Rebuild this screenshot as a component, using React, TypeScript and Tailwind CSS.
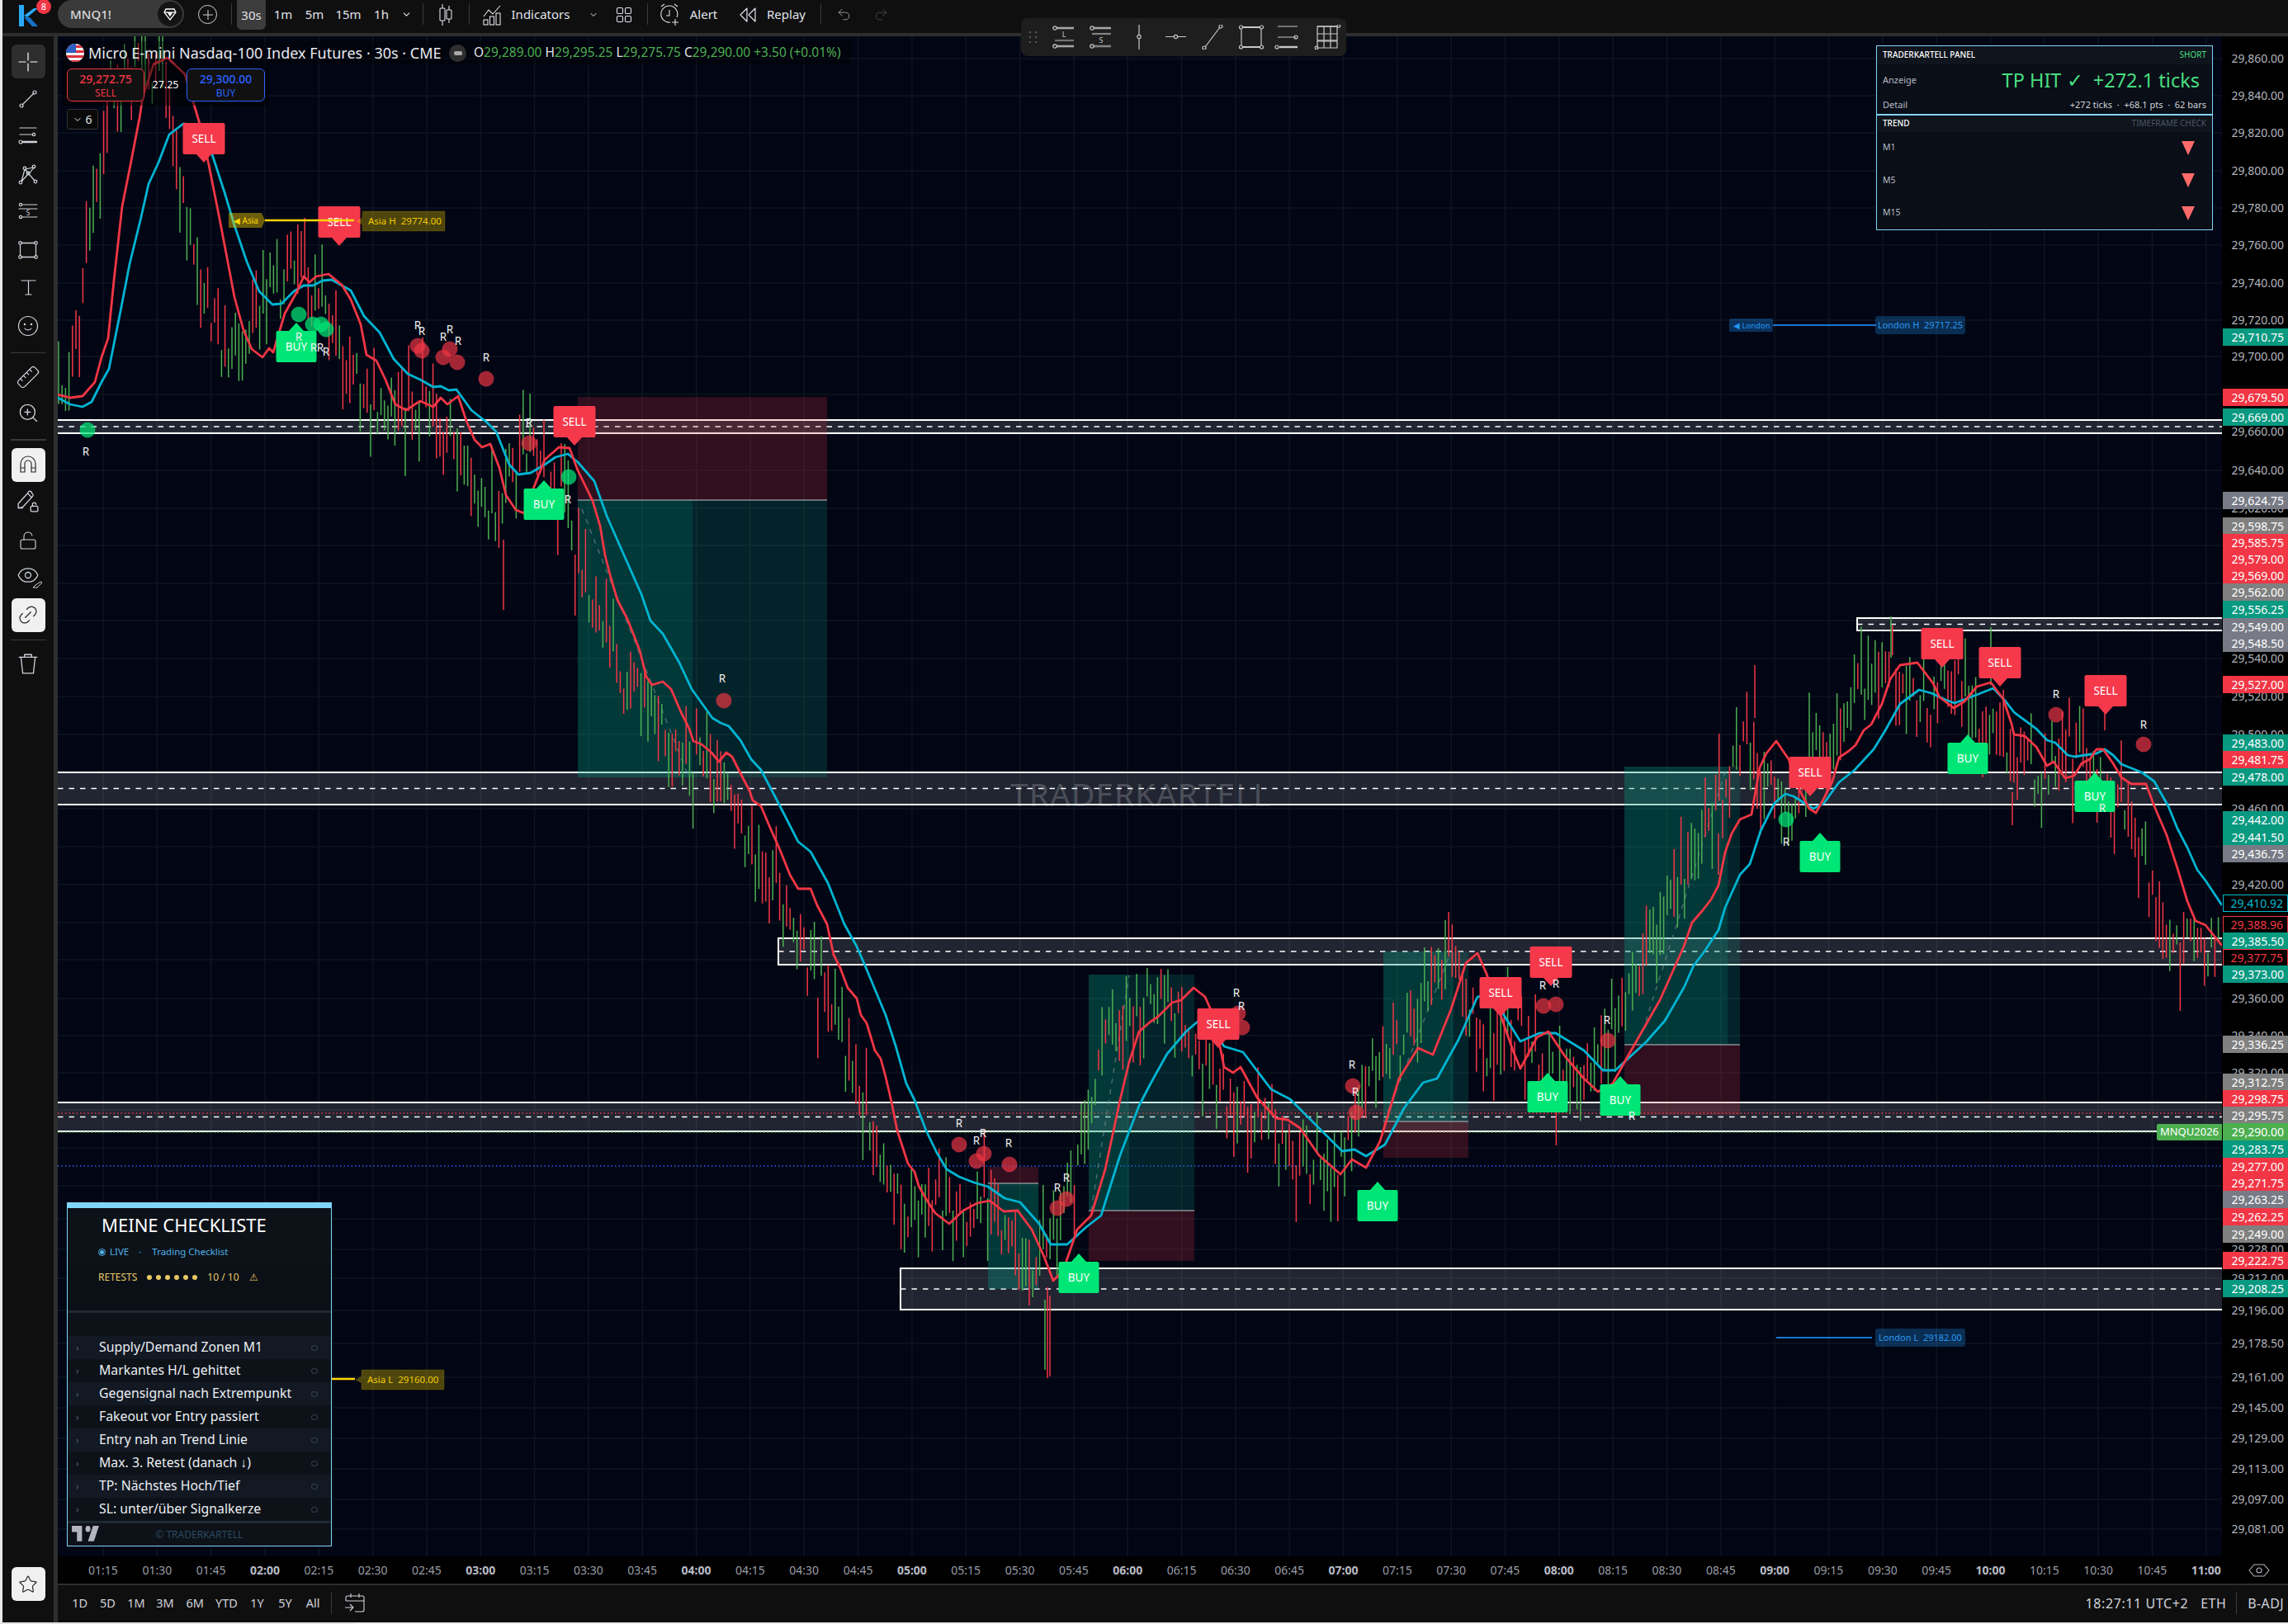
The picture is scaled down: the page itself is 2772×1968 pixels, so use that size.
import React from "react";
import { ChevronDown, LockOpen, Redo2, Star, Undo2, ZoomIn, Ruler, Eye, Link2 } from "lucide-react";

// chart data, page pixel coordinates
const RED = [70,478,85,482,100,480,115,463,123,433,131,410,138,340,148,250,158,200,169,143,173,117,186,78,203,70,224,90,242,150,253,200,265,260,274,307,284,360,295,400,305,423,318,433,326,422,331,427,345,380,360,353,368,335,375,342,383,335,398,332,414,345,425,363,437,393,444,430,456,437,467,460,479,490,492,497,509,486,525,493,534,482,542,490,555,480,565,510,575,533,584,542,594,538,605,567,613,600,625,618,635,622,647,590,660,557,677,542,690,543,700,570,718,607,727,637,733,673,740,700,748,727,760,750,768,770,775,788,783,820,790,830,803,826,813,835,825,863,835,883,840,898,850,902,862,912,871,923,880,912,887,917,897,937,908,958,912,970,922,977,933,1003,945,1030,957,1060,967,1077,982,1077,990,1097,1002,1120,1010,1157,1018,1173,1027,1197,1038,1210,1043,1230,1050,1240,1060,1273,1067,1283,1073,1305,1080,1335,1087,1370,1100,1410,1108,1420,1113,1437,1122,1453,1133,1470,1150,1483,1167,1467,1184,1458,1199,1455,1216,1468,1233,1467,1250,1490,1265,1523,1276,1552,1288,1540,1305,1490,1322,1473,1339,1417,1357,1333,1368,1287,1380,1250,1394,1238,1403,1232,1420,1215,1431,1212,1446,1197,1460,1208,1471,1233,1483,1293,1494,1300,1503,1293,1523,1330,1546,1355,1560,1357,1575,1367,1598,1400,1624,1423,1638,1405,1655,1415,1672,1383,1695,1307,1718,1270,1736,1278,1758,1223,1776,1167,1790,1155,1801,1180,1819,1233,1833,1273,1842,1295,1862,1257,1876,1250,1896,1280,1919,1307,1936,1323,1954,1313,1971,1282,2011,1212,2040,1147,2050,1118,2063,1103,2073,1090,2082,1073,2090,1033,2098,1010,2108,993,2122,987,2132,930,2140,913,2152,898,2167,920,2180,957,2192,980,2200,985,2210,967,2220,947,2228,918,2240,910,2248,903,2258,885,2267,878,2280,853,2290,823,2302,806,2323,803,2342,828,2350,845,2367,858,2380,850,2395,832,2412,827,2427,847,2437,877,2440,890,2453,892,2467,905,2480,928,2488,923,2502,943,2513,940,2522,925,2532,920,2540,908,2548,908,2560,925,2570,942,2582,950,2600,950,2610,977,2625,1012,2638,1052,2650,1092,2660,1116,2672,1121,2692,1146];
const CYAN = [70,482,85,490,100,493,111,487,123,463,132,447,146,377,157,320,171,263,180,223,192,197,205,163,222,150,240,152,257,187,272,233,284,273,299,317,314,353,330,369,341,368,356,353,368,346,379,346,391,340,402,339,425,352,441,383,460,403,477,435,494,453,509,460,525,469,534,468,544,473,553,472,571,497,590,512,601,523,617,563,628,575,643,573,660,563,673,554,688,550,700,560,720,583,735,625,757,675,777,720,788,752,803,768,823,803,838,835,863,870,873,876,883,880,897,897,910,920,922,933,943,973,967,1020,982,1032,1003,1070,1023,1120,1038,1147,1048,1170,1073,1230,1085,1267,1098,1313,1108,1333,1122,1370,1135,1397,1147,1417,1162,1426,1180,1433,1197,1438,1217,1452,1236,1457,1259,1483,1273,1508,1293,1508,1316,1487,1334,1473,1357,1400,1380,1340,1394,1313,1414,1277,1437,1250,1451,1238,1465,1240,1483,1268,1506,1275,1540,1320,1563,1332,1598,1367,1626,1395,1641,1393,1655,1401,1678,1387,1701,1343,1724,1312,1741,1307,1767,1260,1790,1208,1805,1205,1822,1230,1842,1262,1865,1252,1885,1252,1919,1273,1942,1297,1957,1297,1994,1263,2017,1237,2040,1197,2052,1170,2065,1153,2082,1127,2090,1100,2108,1060,2120,1047,2133,1007,2150,973,2163,962,2173,965,2197,980,2210,973,2228,948,2247,933,2270,908,2283,887,2302,853,2325,836,2340,840,2357,848,2368,852,2387,845,2415,834,2430,850,2440,863,2467,883,2480,897,2490,900,2505,915,2513,917,2540,913,2550,908,2560,915,2570,926,2595,936,2610,947,2627,977,2638,1004,2650,1027,2662,1054,2672,1067,2692,1097];

function toPoints(a: number[]) {
  let s = "";
  for (let i = 0; i < a.length; i += 2) s += `${a[i]},${a[i + 1]} `;
  return s;
}

function lerp(a: number[], x: number) {
  if (x <= a[0]) return a[1];
  for (let i = 2; i < a.length; i += 2) {
    if (x <= a[i]) {
      const t = (x - a[i - 2]) / (a[i] - a[i - 2]);
      return a[i - 1] + t * (a[i + 1] - a[i - 1]);
    }
  }
  return a[a.length - 1];
}

function buildCandles() {
  let seed = 73129;
  const rnd = () => {
    seed = (seed + 0x6d2b79f5) | 0;
    let t = Math.imul(seed ^ (seed >>> 15), 1 | seed);
    t = (t + Math.imul(t ^ (t >>> 7), 61 | t)) ^ t;
    return ((t ^ (t >>> 14)) >>> 0) / 4294967296;
  };
  let green = "";
  let red = "";
  for (let x = 71; x < 2690; x += 4.2) {
    const c = lerp(RED, x + 36) + (rnd() - 0.5) * 50;
    const len = 22 + rnd() * 62;
    const k = rnd();
    const rising = lerp(RED, x + 30) > lerp(RED, x + 60);
    const isGreen = rnd() < (rising ? 0.66 : 0.34);
    const seg = `M${x.toFixed(1)} ${(c - len * k).toFixed(1)}V${(c + len * (1 - k)).toFixed(1)}`;
    if (isGreen) green += seg;
    else red += seg;
  }
  // the long wicks
  red += "M610 654V739M1269 1560V1670M2126 806V870M1272 1570V1668M2082 1010V1060M2438 960V1000M2550 860V885";
  green += "M2291 747V797M2412 760V830M1266 1575V1660";
  return { green, red };
}
const candles = buildCandles();

const ZONES = [
  { x: 70, y1: 509, y2: 525, left: false },
  { x: 2250, y1: 749, y2: 764, left: true },
  { x: 70, y1: 936, y2: 975, left: false },
  { x: 943, y1: 1137, y2: 1169, left: true },
  { x: 70, y1: 1336, y2: 1371, left: false },
  { x: 1091, y1: 1537, y2: 1587, left: true },
];

const BOXES = [
  { x1: 700, x2: 1002, inner: 839, teal: [606, 942], rose: [481, 606] },
  { x1: 1197, x2: 1258, inner: 1258, teal: [1434, 1562], rose: [1414, 1434] },
  { x1: 1319, x2: 1447, inner: 1368, teal: [1181, 1467], rose: [1467, 1528] },
  { x1: 1676, x2: 1779, inner: 1761, teal: [1153, 1359], rose: [1359, 1403] },
  { x1: 1968, x2: 2108, inner: 2093, teal: [929, 1266], rose: [1266, 1351] },
];

const SELLS = [[247, 149], [411, 250], [696, 492], [1476, 1222], [1818, 1184], [1879, 1147], [2193, 917], [2353, 761], [2423, 784], [2551, 818]];
const BUYS = [[359, 401], [659, 592], [1307, 1529], [1669, 1442], [1875, 1310], [1963, 1314], [2205, 1019], [2384, 900], [2538, 946]];

const RED_DOTS = [[506, 419], [511, 425], [545, 423], [537, 433], [554, 439], [589, 459], [641, 537], [877, 849], [1162, 1387], [1183, 1407], [1192, 1398], [1223, 1411], [1281, 1464], [1292, 1453], [1500, 1228], [1505, 1245], [1639, 1316], [1643, 1348], [1870, 1219], [1885, 1217], [1948, 1261], [2491, 866], [2597, 902]];
const GREEN_DOTS = [[362, 381], [379, 393], [389, 393], [395, 399], [106, 521], [689, 578], [2164, 993]];
const R_LABELS = [[506, 394], [511, 401], [537, 408], [545, 399], [555, 413], [589, 433], [641, 512], [875, 822], [1162, 1361], [1183, 1382], [1191, 1373], [1222, 1385], [1281, 1439], [1292, 1427], [1498, 1203], [1504, 1219], [1638, 1290], [1642, 1323], [1869, 1194], [1885, 1192], [1947, 1236], [1977, 1352], [2491, 841], [2597, 878], [104, 547], [362, 408], [380, 421], [388, 421], [395, 426], [688, 605], [2164, 1020], [2547, 979]];

const PRICE_LABELS = [["29,860.00", 71], ["29,840.00", 116], ["29,820.00", 161], ["29,800.00", 207], ["29,780.00", 252], ["29,760.00", 297], ["29,740.00", 343], ["29,720.00", 388], ["29,700.00", 432], ["29,660.00", 523], ["29,640.00", 570], ["29,620.00", 616], ["29,540.00", 798], ["29,520.00", 844], ["29,500.00", 890], ["29,460.00", 980], ["29,420.00", 1072], ["29,360.00", 1210], ["29,340.00", 1255], ["29,320.00", 1300], ["29,228.00", 1514], ["29,212.00", 1549], ["29,196.00", 1588], ["29,178.50", 1628], ["29,161.00", 1669], ["29,145.00", 1706], ["29,129.00", 1743], ["29,113.00", 1780], ["29,097.00", 1817], ["29,081.00", 1853]] as [string, number][];

const TEAL = "bg-[#089981] text-white";
const ROSE = "bg-[#f23645] text-white";
const SLATE = "bg-[#787b86] text-white";
const GREY = "bg-[#808080] text-white";
const PRICE_TAGS = [
  ["29,710.75", 408, TEAL], ["29,679.50", 481, ROSE], ["29,669.00", 505, TEAL], ["29,624.75", 606, SLATE], ["29,598.75", 637, GREY], ["29,585.75", 657, ROSE], ["29,579.00", 677, ROSE], ["29,569.00", 697, ROSE], ["29,562.00", 717, GREY], ["29,556.25", 738, TEAL], ["29,549.00", 759, SLATE], ["29,548.50", 779, SLATE], ["29,527.00", 829, ROSE], ["29,483.00", 900, TEAL], ["29,481.75", 920, ROSE], ["29,478.00", 941, TEAL], ["29,442.00", 993, TEAL], ["29,441.50", 1014, TEAL], ["29,436.75", 1034, SLATE],
  ["29,410.92", 1094, "bg-black text-[#00bcd4] border border-[#00bcd4]"], ["29,388.96", 1120, "bg-black text-[#f23645] border border-[#f23645]"], ["29,385.50", 1140, TEAL], ["29,377.75", 1160, "bg-black text-[#f23645] border border-[#f23645]"], ["29,373.00", 1180, TEAL],
  ["29,336.25", 1265, GREY], ["29,312.75", 1311, GREY], ["29,298.75", 1331, ROSE], ["29,295.75", 1351, GREY], ["29,290.00", 1371, "bg-[#4caf50] text-white"], ["29,283.75", 1392, TEAL], ["29,277.00", 1413, ROSE], ["29,271.75", 1433, ROSE], ["29,263.25", 1453, SLATE], ["29,262.25", 1474, ROSE], ["29,249.00", 1495, GREY], ["29,222.75", 1527, ROSE], ["29,208.25", 1561, TEAL],
] as [string, number, string][];

const TIME_LABELS: string[] = [];
for (let i = 0; i < 40; i++) {
  const m = 75 + i * 15;
  TIME_LABELS.push(`${String(Math.floor(m / 60)).padStart(2, "0")}:${String(m % 60).padStart(2, "0")}`);
}

const CHECKS = ["Supply/Demand Zonen M1", "Markantes H/L gehittet", "Gegensignal nach Extrempunkt", "Fakeout vor Entry passiert", "Entry nah an Trend Linie", "Max. 3. Retest (danach ↓)", "TP: Nächstes Hoch/Tief", "SL: unter/über Signalkerze"];

function ToolSvg({ children, size = 26 }: { children: React.ReactNode; size?: number }) {
  return (
    <svg width={size} height={size} viewBox="0 0 26 26" fill="none" stroke="currentColor" strokeWidth="1.2" strokeLinecap="round" strokeLinejoin="round">
      {children}
    </svg>
  );
}

function ToolSlot({ className, children }: { className: string; children: React.ReactNode }) {
  return <div className={`relative flex w-[41px] items-center justify-center ${className}`}>{children}</div>;
}

function LeftToolbar() {
  const plain = "text-[#d1d4dc]";
  const active = "rounded-md bg-[#f0f0f0] text-[#2a2a2a]";
  return (
    <div className="flex w-[62px] flex-col items-center bg-[#0f0f0f]">
      <ToolSlot className="mt-[10px] h-[41px] rounded-md bg-[#2e2e2e] text-white">
        <ToolSvg><path d="M13 2v9M13 15v9M2 13h8M16 13h8" /></ToolSvg>
      </ToolSlot>
      <ToolSlot className={`mt-[2px] h-[45.5px] ${plain}`}>
        <ToolSvg><path d="M6 20 20 6" /><circle cx="5" cy="21" r="2" /><circle cx="21" cy="5" r="2" /></ToolSvg>
      </ToolSlot>
      <ToolSlot className={`h-[45.5px] ${plain}`}>
        <ToolSvg><path d="M3 3h20M3 11h15" /><circle cx="20" cy="11" r="1.7" /><path d="M7 20h16" strokeWidth="2.4" /><circle cx="4" cy="20" r="2" /></ToolSvg>
      </ToolSlot>
      <ToolSlot className={`h-[45.5px] ${plain}`}>
        <ToolSvg><path d="M5 22 9 7M10 7l9-2M10 8l11 13M14 13l6-8M5 22l8-9" /><circle cx="4" cy="23" r="1.8" /><circle cx="9" cy="6" r="1.8" /><circle cx="20" cy="4" r="1.8" /><circle cx="13" cy="12" r="1.8" /><circle cx="22" cy="22" r="1.8" /></ToolSvg>
      </ToolSlot>
      <ToolSlot className={`h-[47px] ${plain}`}>
        <ToolSvg><path d="M6 4h18M2 9h22M6 19h18" /><circle cx="4" cy="4" r="1.7" /><circle cx="4" cy="19" r="1.7" /><text x="13" y="17" fontSize="8" fill="currentColor" stroke="none" textAnchor="middle">S</text></ToolSvg>
      </ToolSlot>
      <ToolSlot className={`h-[45px] ${plain}`}>
        <ToolSvg><path d="M5 4.500h16M5 21.500h16" strokeWidth="1.600" /><path d="M3.500 7v12M22.500 7v12" /><circle cx="3.500" cy="4.500" r="1.800" /><circle cx="22.500" cy="4.500" r="1.800" /><circle cx="3.500" cy="21.500" r="1.800" /><circle cx="22.500" cy="21.500" r="1.800" /></ToolSvg>
      </ToolSlot>
      <ToolSlot className={`h-[46px] ${plain}`}>
        <ToolSvg><path d="M5 4h17M13.500 4v17M10 21h7" /></ToolSvg>
      </ToolSlot>
      <ToolSlot className={`h-[46px] ${plain}`}>
        <ToolSvg><circle cx="13" cy="13" r="11.500" /><circle cx="9" cy="11" r=".7" fill="currentColor" /><circle cx="17" cy="11" r=".7" fill="currentColor" /><path d="M9 16c2 2.500 6 2.500 8 0" /></ToolSvg>
      </ToolSlot>
      <div className="mt-[9px] h-px w-[43px] bg-[#3a3a3a]" />
      <ToolSlot className={`mt-[7px] h-[44px] ${plain}`}><Ruler size={30} strokeWidth={1} className="-scale-x-100" /></ToolSlot>
      <ToolSlot className={`h-[44px] ${plain}`}><ZoomIn size={27} strokeWidth={1.2} /></ToolSlot>
      <div className="mt-[9px] h-[2px] w-[43px] bg-[#3a3a3a]" />
      <ToolSlot className={`mt-[9px] h-[41px] ${active}`}>
        <ToolSvg><path d="M4 22V12a9 9 0 0 1 18 0v10h-5V12a4 4 0 0 0-8 0v10ZM4 17h5M17 17h5" /></ToolSvg>
      </ToolSlot>
      <ToolSlot className={`h-[47px] ${plain}`}>
        <ToolSvg size={28}><path d="M2 21V16L13 4a2 2 0 0 1 4 0l1 1a2 2 0 0 1 0 3L7 20Z" /><path d="M2 21h5M13 5l4 4" /><rect x="16" y="19" width="8" height="6" rx="1" /><path d="M18 19v-2a2 2 0 0 1 4 0" /></ToolSvg>
      </ToolSlot>
      <ToolSlot className={`h-[48px] ${plain}`}><LockOpen size={24} strokeWidth={1.1} /></ToolSlot>
      <ToolSlot className={`h-[36px] ${plain}`}>
        <Eye size={28} strokeWidth={1.1} />
        <svg className="absolute bottom-[2px] right-[3px]" width="13" height="9" viewBox="0 0 13 9" fill="none" stroke="currentColor" strokeWidth="1"><path d="M1 8h5l6-6-2-1-6 4Z" /></svg>
      </ToolSlot>
      <ToolSlot className={`mt-[10px] h-[41px] ${active}`}><Link2 size={28} strokeWidth={1.1} className="-rotate-45" /></ToolSlot>
      <div className="mt-[9px] h-px w-[43px] bg-[#3a3a3a]" />
      <ToolSlot className={`mt-[4px] h-[48px] ${plain}`}>
        <ToolSvg size={28}><path d="M3 6h20M9 6V3h8v3M5 6l2 18h12l2-18" /></ToolSvg>
      </ToolSlot>
      <ToolSlot className={`mb-[26px] mt-auto h-[41px] ${active}`}><Star size={24} strokeWidth={1.2} /></ToolSlot>
    </div>
  );
}

function TopBar() {
  const divider = "h-[26px] w-px bg-[#3a3a3a]";
  const tf = "flex items-center justify-center text-[15px]";
  const bright = "text-[#e0e3eb]";
  return (
    <div className="relative flex h-[40px] items-start bg-[#0f0f0f]">
      <div className="relative h-[36px] w-[67px]">
        <svg className="absolute left-[19px] top-[6px]" width="26" height="26" viewBox="0 0 26 26">
          <path d="M1 0h6v26H1z" fill="#29aaf5" />
          <path d="M7 13 19 4h5L11 15Z" fill="#29aaf5" />
          <path d="M7 15h7l10 11h-7Z" fill="#1572c8" />
        </svg>
        <div className="absolute left-[41px] top-[-1px] flex h-[18px] w-[18px] items-center justify-center rounded-full bg-[#f23645] text-[11px] text-white">8</div>
      </div>
      <div className="flex h-[34px] w-[153px] items-center rounded-r-full rounded-l-full bg-[#3a3a3a] pl-[15px] text-[15px] font-medium text-[#d8d8d8]">
        MNQ1!
        <div className="ml-auto mr-[2px] flex h-[30px] w-[30px] items-center justify-center rounded-full bg-[#141414] text-white">
          <svg width="18" height="18" viewBox="0 0 18 18" fill="none" stroke="currentColor" strokeWidth="1.300">
            <path d="M4 3h10l2 4-7 9-7-9Z" /><path d="M2 7h14" /><path d="M7 8h4l-2 3Z" fill="currentColor" />
          </svg>
        </div>
      </div>
      <div className="ml-[17px] mt-[6px] flex h-[23px] w-[23px] items-center justify-center rounded-full border border-[#d1d4dc] text-[#d1d4dc]">
        <svg width="12" height="12" viewBox="0 0 12 12" stroke="currentColor"><path d="M6 0v12M0 6h12" /></svg>
      </div>
      <div className={`ml-[17px] mt-[4px] ${divider}`} />
      <div className={`ml-[6px] h-[36px] w-[35px] rounded-b-md bg-[#3c3c3c] ${tf} ${bright}`}>30s</div>
      <div className={`ml-[6px] h-[35px] w-[30px] ${tf} ${bright}`}>1m</div>
      <div className={`ml-[8px] h-[35px] w-[30px] ${tf} ${bright}`}>5m</div>
      <div className={`ml-[9px] h-[35px] w-[34px] ${tf} ${bright}`}>15m</div>
      <div className={`ml-[11px] h-[35px] w-[24px] ${tf} ${bright}`}>1h</div>
      <div className={`ml-[11px] h-[35px] w-[14px] ${tf} ${bright}`}><ChevronDown size={13} /></div>
      <div className={`ml-[13px] mt-[4px] ${divider}`} />
      <div className={`ml-[17px] h-[35px] w-[20px] ${tf} ${bright}`}>
        <svg width="20" height="28" viewBox="0 0 20 28" fill="none" stroke="currentColor" strokeWidth="1.100"><path d="M6 1v5M6 21v6M14 3v5M14 19v5" /><rect x="3" y="6" width="6" height="15" rx="1" /><rect x="11" y="8" width="6" height="11" rx="1" /></svg>
      </div>
      <div className={`ml-[18px] mt-[4px] ${divider}`} />
      <div className={`ml-[15px] h-[35px] w-[24px] ${tf} ${bright}`}>
        <svg width="24" height="26" viewBox="0 0 24 26" fill="none" stroke="currentColor" strokeWidth="1.100"><path d="M2 15 8 7l5 5 9-10" /><rect x="2" y="19" width="5" height="6" /><rect x="9.500" y="15" width="5" height="10" /><rect x="17" y="11" width="5" height="14" /></svg>
      </div>
      <div className={`ml-[10px] h-[35px] w-[74px] ${tf} ${bright}`}>Indicators</div>
      <div className={`ml-[21px] h-[35px] w-[12px] ${tf} ${bright}`}><ChevronDown size={12} /></div>
      <div className={`ml-[21px] h-[35px] w-[20px] ${tf} ${bright}`}>
        <svg width="20" height="20" viewBox="0 0 20 20" fill="none" stroke="currentColor" strokeWidth="1.100"><rect x="1.500" y="1.500" width="7" height="7" rx="1.500" /><rect x="11.500" y="1.500" width="7" height="7" rx="1.500" /><rect x="1.500" y="11.500" width="7" height="7" rx="1.500" /><rect x="11.500" y="11.500" width="7" height="7" rx="1.500" /></svg>
      </div>
      <div className={`ml-[18px] mt-[4px] ${divider}`} />
      <div className={`ml-[14px] h-[35px] w-[24px] ${tf} ${bright}`}>
        <svg width="24" height="28" viewBox="0 0 24 28" fill="none" stroke="currentColor" strokeWidth="1.100"><path d="M13 23a10 10 0 1 1 8-6" /><path d="M12 8v7h-4M2 4l4-3M22 4l-4-3M19 19v8M15 23h8" /></svg>
      </div>
      <div className={`ml-[11px] h-[35px] w-[37px] ${tf} ${bright}`}>Alert</div>
      <div className={`ml-[24px] h-[35px] w-[22px] ${tf} ${bright}`}>
        <svg width="22" height="20" viewBox="0 0 22 20" fill="none" stroke="currentColor" strokeWidth="1.200" strokeLinejoin="round"><path d="M10 2 2 10l8 8ZM20 2l-8 8 8 8Z" /></svg>
      </div>
      <div className={`ml-[10px] h-[35px] w-[51px] ${tf} ${bright}`}>Replay</div>
      <div className={`ml-[16px] mt-[4px] ${divider}`} />
      <div className={`ml-[17px] h-[35px] w-[20px] ${tf} text-[#9a9a9a]`}><Undo2 size={19} strokeWidth={1.200} /></div>
      <div className={`ml-[25px] h-[35px] w-[20px] ${tf} text-[#4a4a4a]`}><Redo2 size={19} strokeWidth={1.200} /></div>
    </div>
  );
}

function FloatingTools() {
  return (
    <div className="absolute left-[1237px] top-[22px] flex h-[46px] w-[394px] items-center rounded-lg bg-[#1e1e1e] pl-[10px] text-[#c8c8c8]">
      <div className="grid w-[10px] grid-cols-2 gap-x-[3px] gap-y-[4px]">
        {[0, 1, 2, 3, 4, 5].map((i) => <div key={i} className="h-[2px] w-[2px] bg-[#5a5a5a]" />)}
      </div>
      <svg className="ml-[17px]" width="356" height="30" viewBox="0 0 356 30" fill="none" stroke="currentColor" strokeWidth="1.200">
        {/* long */}
        <circle cx="4" cy="4" r="2.200" /><path d="M6 4h21" strokeWidth="2.600" opacity=".8" />
        <text x="15" y="15" fontSize="9" fill="currentColor" stroke="none" textAnchor="middle">L</text>
        <path d="M4 19h23" strokeWidth="2.200" opacity=".5" /><circle cx="4" cy="26" r="2.200" /><path d="M6 26h21" strokeWidth="2.600" opacity=".8" />
        {/* short */}
        <circle cx="49" cy="4" r="2.200" /><path d="M51 4h21" strokeWidth="2.600" opacity=".8" /><path d="M49 11h23" strokeWidth="2.200" opacity=".6" />
        <text x="60" y="22" fontSize="9" fill="currentColor" stroke="none" textAnchor="middle">S</text>
        <circle cx="49" cy="26" r="2.200" /><path d="M51 26h21" strokeWidth="2.600" opacity=".6" />
        {/* vertical */}
        <path d="M106 0v12M106 17v13" /><circle cx="106" cy="14.500" r="2.200" />
        {/* horizontal */}
        <path d="M138 14.500h10M153 14.500h10" /><circle cx="150.500" cy="14.500" r="2.200" />
        {/* trend */}
        <path d="M186 27 204 3" /><circle cx="185" cy="28" r="2" /><circle cx="205" cy="2" r="2" />
        {/* rectangle */}
        <path d="M232 3h20M232 27h20" strokeWidth="2" /><path d="M230 5v20M254 5v20" />
        <circle cx="229.500" cy="3" r="2" /><circle cx="254.500" cy="3" r="2" /><circle cx="229.500" cy="27" r="2" /><circle cx="254.500" cy="27" r="2" />
        {/* fib */}
        <path d="M274 2h24M274 15h22" /><circle cx="296" cy="15" r="2" /><path d="M276 27h22" strokeWidth="2.400" /><circle cx="273" cy="27" r="2" />
        {/* fib grid */}
        <path d="M322 2h24v26h-24ZM330 2v26M338 2v26M322 11h24M322 20h24" /><path d="M322 2h24M322 19h24" strokeWidth="2.200" opacity=".7" />
        <circle cx="348" cy="1.500" r="1.800" /><circle cx="321" cy="28" r="1.800" />
      </svg>
    </div>
  );
}

function Legend() {
  return (
    <>
      <div className="absolute left-[5px] top-[6px] flex h-[28px] w-[955px] items-center bg-[#000000]/35 pl-[5px]">
        <svg width="22" height="22" viewBox="0 0 22 22">
          <clipPath id="flag-clip"><circle cx="11" cy="11" r="11" /></clipPath>
          <g clipPath="url(#flag-clip)">
            <rect width="22" height="22" fill="#f4f4f4" />
            <path d="M0 2h22v3H0zM0 8h22v3H0zM0 14h22v3H0zM0 20h22v3H0z" fill="#e0313f" />
            <rect width="12" height="11" fill="#2d5fc4" />
          </g>
        </svg>
        <span className="ml-[5px] w-[426px] whitespace-nowrap text-[18px] text-[#e8eaef]">Micro E-mini Nasdaq-100 Index Futures · 30s · CME</span>
        <div className="ml-[11px] flex h-[21px] w-[21px] items-center justify-center rounded-full bg-[#2e2e2e]">
          <div className="h-[5px] w-[10px] rounded-[2px] bg-[#a8a8a8]" />
        </div>
        <span className="ml-[9px] whitespace-nowrap text-[15.500px] text-[#4caf50]">
          <span className="text-[#e0e3eb]">O</span>29,289.00 <span className="text-[#e0e3eb]">H</span>29,295.25 <span className="text-[#e0e3eb]">L</span>29,275.75 <span className="text-[#e0e3eb]">C</span>29,290.00 +3.50 (+0.01%)
        </span>
      </div>
      <div className="absolute left-[5px] top-[34px] flex h-[50px] w-[251px] items-center bg-[#000000]/50 pl-[6px]">
        <div className="flex h-[40px] w-[94px] flex-col items-center justify-center rounded-md border-[1.500px] border-[#f23645] bg-[#111111] text-[#f23645]">
          <span className="text-[14px] font-medium leading-[18px]">29,272.75</span>
          <span className="text-[12px] leading-[15px]">SELL</span>
        </div>
        <span className="w-[51px] text-center text-[12.500px] text-white">27.25</span>
        <div className="flex h-[40px] w-[95px] flex-col items-center justify-center rounded-md border-[1.500px] border-[#2962ff] bg-[#111111] text-[#2962ff]">
          <span className="text-[14px] font-medium leading-[18px]">29,300.00</span>
          <span className="text-[12px] leading-[15px]">BUY</span>
        </div>
      </div>
      <div className="absolute left-[11px] top-[88px] flex h-[25px] w-[38px] items-center justify-center gap-[3px] rounded-[3px] border border-[#333333] bg-[#0a0a0a] text-[14px] text-[#e0e3eb]">
        <ChevronDown size={12} />6
      </div>
    </>
  );
}

function TraderPanel() {
  const arrow = "h-0 w-0 border-x-[8px] border-t-[17px] border-x-transparent border-t-[#ff6b6b]";
  return (
    <div className="absolute left-[2203px] top-[11px] flex h-[224px] w-[408px] flex-col border-[1.500px] border-[#81d4fa] bg-[#090e17] text-[#b8bcc6]">
      <div className="flex h-[21.500px] items-center justify-between bg-[#0f141d] px-[7px] text-[10px]">
        <span className="font-medium text-white">TRADERKARTELL PANEL</span>
        <span className="text-[#4ade80]">SHORT</span>
      </div>
      <div className="flex h-[40px] items-center justify-between pl-[7px] pr-[15px]">
        <span className="text-[11px]">Anzeige</span>
        <span className="whitespace-pre text-[23.500px] text-[#4ade80]">TP HIT ✓  +272.1 ticks</span>
      </div>
      <div className="flex h-[20px] items-center justify-between px-[7px] text-[11px]">
        <span>Detail</span>
        <span className="whitespace-pre text-[#cfd3da]">+272 ticks  ·  +68.1 pts  ·  62 bars</span>
      </div>
      <div className="h-[2px] bg-[#81d4fa]" />
      <div className="flex h-[20px] items-center justify-between bg-[#0f141d] px-[7px] text-[10px]">
        <span className="font-medium text-white">TREND</span>
        <span className="text-[#4b5563]">TIMEFRAME CHECK</span>
      </div>
      {["M1", "M5", "M15"].map((tf) => (
        <div key={tf} className="flex h-[39.500px] items-center justify-between pl-[7px] pr-[21px] text-[10.500px]">
          <span>{tf}</span>
          <div className={arrow} />
        </div>
      ))}
    </div>
  );
}

function Checklist() {
  return (
    <div className="absolute left-[11px] top-[1413px] flex h-[417px] w-[321px] flex-col border-x-[1.500px] border-b-[1.500px] border-[#81d4fa] bg-[#0d1219]">
      <div className="h-[7px] bg-[#81d4fa]" />
      <div className="flex h-[69px] flex-col pl-[41px] pt-[6px]">
        <div className="h-[28px] text-[22px] leading-[28px] text-white">MEINE CHECKLISTE</div>
        <div className="-ml-[4px] mt-[9px] flex h-[20px] items-center text-[11.500px] text-[#4fb3e8]">
          <div className="flex h-[9px] w-[9px] items-center justify-center rounded-full border border-[#4fb3e8]"><div className="h-[5px] w-[5px] rounded-full bg-[#4fb3e8]" /></div>
          <span className="ml-[5px]">LIVE</span>
          <span className="ml-[12px]">·</span>
          <span className="ml-[13px]">Trading Checklist</span>
        </div>
      </div>
      <div className="flex h-[55px] items-start bg-[#0b1017] pl-[37px] pt-[6px] text-[12px] text-[#e9c864]">
        <span>RETESTS</span>
        <div className="ml-[12px] mt-[6px] flex gap-[5px]">
          {[0, 1, 2, 3, 4, 5].map((i) => <div key={i} className="h-[6px] w-[6px] rounded-full bg-[#e9c864]" />)}
        </div>
        <span className="ml-[12px]">10 / 10</span>
        <span className="ml-[12px]">⚠</span>
      </div>
      <div className="h-[3px] bg-[#1f2933]" />
      <div className="h-[28px]" />
      {CHECKS.map((c, i) => (
        <div key={c} className={`flex h-[28px] items-center ${i % 2 === 0 ? "bg-[#131923]" : "bg-[#0d1219]"}`}>
          <span className="w-[38px] pl-[10px] text-[11px] text-[#5a6472]">›</span>
          <span className="text-[15.800px] text-[#eceff3]">{c}</span>
          <div className="ml-auto mr-[16px] h-[7px] w-[8px] rounded-full border border-[#3c4654]" />
        </div>
      ))}
      <div className="h-[3px] bg-[#1f2933]" />
      <div className="relative flex flex-1 items-center justify-center text-[12px] text-[#2b4a60]">
        <svg className="absolute left-[3px] top-[3px]" width="37" height="20" viewBox="0 6 36 16" preserveAspectRatio="none">
          <path d="M14 6H2v6h6v9h6V6Zm14 15h-7l6-15h7l-6 15Zm-7-9a3 3 0 1 0 0-6 3 3 0 0 0 0 6Z" fill="#b2b5be" />
        </svg>
        © TRADERKARTELL
      </div>
    </div>
  );
}

function ChartSvg() {
  const gridX: number[] = [];
  for (let i = 0; i < 40; i++) gridX.push(125 + i * 65.33);
  const gridY = [71, 116, 161, 207, 252, 297, 343, 388, 432, 478, 523, 570, 616, 661, 707, 752, 798, 844, 890, 935, 980, 1026, 1072, 1118, 1163, 1210, 1255, 1300, 1345, 1391, 1437, 1477, 1514, 1549, 1588, 1628, 1669, 1706, 1743, 1780, 1817, 1853];
  return (
    <svg className="absolute inset-0" width="2622" height="1842" viewBox="70 44 2622 1842">
      {gridX.map((x) => <path key={x} d={`M${x} 44V1886`} stroke="#0f1520" strokeWidth="1.500" />)}
      {gridY.map((y) => <path key={y} d={`M70 ${y}H2692`} stroke="#0f1520" strokeWidth="1.500" />)}

      {ZONES.map((z) => (
        <g key={z.y1}>
          <rect x={z.x} y={z.y1} width={2692 - z.x} height={z.y2 - z.y1} fill="#ffffff" fillOpacity="0.125" />
          <path d={`M${z.x} ${(z.y1 + z.y2) / 2}H2692`} stroke="#ffffff" strokeWidth="1.500" strokeDasharray="6.500 7" />
          <path d={z.left ? `M2692 ${z.y1}H${z.x}V${z.y2}H2692` : `M2692 ${z.y1}H${z.x}M${z.x} ${z.y2}H2692`} stroke="#ffffff" strokeWidth="2" fill="none" />
        </g>
      ))}

      <path d="M70 1349H2692" stroke="#f23645" strokeWidth="1.500" strokeDasharray="1.500 3" />
      <path d="M70 1372H2613" stroke="#4caf50" strokeWidth="1.500" strokeDasharray="1.500 3" />
      <path d="M70 1413H2692" stroke="#2962ff" strokeWidth="1.500" strokeDasharray="1.500 3" />

      {BOXES.map((b) => (
        <g key={b.x1}>
          <rect x={b.x1} y={b.rose[0]} width={b.x2 - b.x1} height={b.rose[1] - b.rose[0]} fill="#f23645" fillOpacity="0.2" />
          <rect x={b.x1} y={b.teal[0]} width={b.x2 - b.x1} height={b.teal[1] - b.teal[0]} fill="#089981" fillOpacity="0.2" />
          <rect x={b.x1} y={b.teal[0]} width={b.inner - b.x1} height={b.teal[1] - b.teal[0]} fill="#089981" fillOpacity="0.18" />
          <path d={b.teal[0] > b.rose[0] ? `M${b.x1} ${b.teal[0]}H${b.x2}` : `M${b.x1} ${b.teal[1]}H${b.x2}`} stroke="#8a8f98" strokeWidth="1.500" />
        </g>
      ))}
      <path d="M705 617 833 938M1322 1467 1368 1182M1681 1348 1758 1153M1990 1250 2092 930" stroke="#7d8a8f" strokeWidth="1.500" strokeDasharray="6 7" opacity=".6" fill="none" />

      <path d={candles.green} stroke="#4caf50" strokeWidth="1.500" fill="none" />
      <path d={candles.red} stroke="#f23645" strokeWidth="1.500" fill="none" />
      <polyline points={toPoints(CYAN)} fill="none" stroke="#00b4d2" strokeWidth="2.800" strokeLinejoin="round" />
      <polyline points={toPoints(RED)} fill="none" stroke="#f23645" strokeWidth="2.800" strokeLinejoin="round" />

      {RED_DOTS.map(([x, y]) => <circle key={`${x}-${y}`} cx={x} cy={y} r="9.300" fill="#f23645" fillOpacity="0.68" stroke="#f23645" strokeOpacity=".2" />)}
      {GREEN_DOTS.map(([x, y]) => <circle key={`${x}-${y}`} cx={x} cy={y} r="9.300" fill="#00e676" fillOpacity="0.72" stroke="#00e676" strokeOpacity=".2" />)}

      {SELLS.map(([cx, y]) => (
        <g key={cx}>
          <path d={`M${cx - 25.500} ${y + 2}a2 2 0 0 1 2-2h47a2 2 0 0 1 2 2v34a2 2 0 0 1-2 2h-14.500l-9 10-9-10h-14.500a2 2 0 0 1-2-2Z`} fill="#f5394b" />
          <text x={cx} y={y + 24} fontSize="13.500" fill="#ffffff" textAnchor="middle">SELL</text>
        </g>
      ))}
      {BUYS.map(([cx, y]) => (
        <g key={cx}>
          <path d={`M${cx - 24.500} ${y + 2}a2 2 0 0 1 2-2h13.500l9-10 9 10h13.500a2 2 0 0 1 2 2v34a2 2 0 0 1-2 2h-45a2 2 0 0 1-2-2Z`} fill="#00e676" />
          <text x={cx} y={y + 24} fontSize="13.500" fill="#ffffff" textAnchor="middle">BUY</text>
        </g>
      ))}
      {R_LABELS.map(([x, y]) => <text key={`${x}-${y}`} x={x} y={y + 5} fontSize="13.500" fill="#f0f0f0" textAnchor="middle">R</text>)}

      {/* session labels */}
      <path d="M321 267H429M402 1671H430" stroke="#ffd600" strokeWidth="2.500" />
      <path d="M277 259a1 1 0 0 1 1-1H317l4 9-4 9H278a1 1 0 0 1-1-1Z" fill="#ffd600" fillOpacity="0.42" />
      <text x="283" y="271" fontSize="10" fill="#ffd600">◀ Asia</text>
      {[[439, 256, "Asia H  29774.00"], [438, 1660, "Asia L  29160.00"]].map(([x, y, t]) => (
        <g key={t as string}>
          <path d={`M${x as number} ${(y as number) + 1}a1 1 0 0 1 1-1h98a1 1 0 0 1 1 1v22a1 1 0 0 1-1 1h-98a1 1 0 0 1-1-1v-7l-7-4 7-4Z`} fill="#ffd600" fillOpacity="0.3" stroke="#ffd600" strokeOpacity=".15" />
          <text x={(x as number) + 7} y={(y as number) + 16} fontSize="11.500" fill="#f2ca00" xmlSpace="preserve">{t as string}</text>
        </g>
      ))}
      <path d="M2148 394H2273M2152 1621H2268" stroke="#1976d2" strokeWidth="1.800" />
      <rect x="2095" y="386" width="53" height="16" rx="2" fill="#1e88e5" fillOpacity="0.35" />
      <text x="2100" y="398" fontSize="9.500" fill="#2196f3">◀ London</text>
      {[[2272, 383, "London H  29717.25"], [2272, 1610, "London L  29182.00"]].map(([x, y, t]) => (
        <g key={t as string}>
          <rect x={x as number} y={y as number} width="109" height="22" rx="3" fill="#1e88e5" fillOpacity="0.3" />
          <text x={(x as number) + 54.500} y={(y as number) + 15} fontSize="11" fill="#2a9af0" textAnchor="middle" xmlSpace="preserve">{t as string}</text>
        </g>
      ))}

      <text x="1382" y="977" fontSize="39" fill="#ffffff" fillOpacity="0.2" textAnchor="middle" letterSpacing="1">TRADERKARTELL</text>
    </svg>
  );
}

function PriceAxis() {
  return (
    <div className="relative w-[80px] bg-black text-[14px]">
      {PRICE_LABELS.map(([t, y]) => (
        <div key={t} className="absolute right-[5px] leading-[18px] text-[#b2b5be]" style={{ top: y - 44 - 9 }}>{t}</div>
      ))}
      {PRICE_TAGS.map(([t, y, c]) => (
        <div key={t} className={`absolute left-px right-0 box-border flex h-[21px] items-center justify-end pr-[5px] ${c}`} style={{ top: y - 44 - 10.5 }}>{t}</div>
      ))}
    </div>
  );
}

function BottomBar() {
  const item = "flex items-center justify-center";
  return (
    <div className="flex h-[45px] items-center border-t-2 border-[#2e2e2e] bg-[#0f0f0f] pl-[10px] text-[14.500px] text-[#d1d4dc]">
      <div className={`w-[33.500px] ${item}`}>1D</div>
      <div className={`w-[34px] ${item}`}>5D</div>
      <div className={`w-[35px] ${item}`}>1M</div>
      <div className={`w-[35px] ${item}`}>3M</div>
      <div className={`w-[37.500px] ${item}`}>6M</div>
      <div className={`w-[39px] ${item}`}>YTD</div>
      <div className={`w-[35px] ${item}`}>1Y</div>
      <div className={`w-[33px] ${item}`}>5Y</div>
      <div className={`w-[34px] ${item}`}>All</div>
      <div className="ml-[5px] h-[26px] w-px bg-[#3a3a3a]" />
      <div className="ml-[16px]">
        <svg width="24" height="24" viewBox="0 0 24 24" fill="none" stroke="currentColor" strokeWidth="1.100">
          <path d="M1 9V5a2 2 0 0 1 2-2h18a2 2 0 0 1 2 2v15a2 2 0 0 1-2 2H12M1 9h22M7 0v5M17 0v5M0 17h9M6 13l4 4-4 4" />
        </svg>
      </div>
      <span className="ml-auto text-[16px] tracking-[0.6px]">18:27:11 UTC+2</span>
      <span className="ml-[15px] text-[16px] tracking-[0.4px]">ETH</span>
      <div className="ml-[12px] h-[26px] w-px bg-[#3a3a3a]" />
      <span className="ml-[13px] mr-[5px] text-[16px] tracking-[0.4px]">B-ADJ</span>
    </div>
  );
}

export default function App() {
  return (
    <div className="relative flex h-[1968px] w-[2772px] overflow-hidden bg-[#e8e8e8] pl-[3px] font-['Noto_Sans',sans-serif]">
      <div className="flex min-w-0 flex-1 flex-col">
        <TopBar />
        <div className="h-[4px] bg-[#2e2e2e]" />
        <div className="flex h-[1922px]">
          <LeftToolbar />
          <div className="w-[5px] bg-[#2e2e2e]" />
          <div className="flex w-[2702px] flex-col bg-black">
            <div className="flex h-[1842px]">
              <div className="relative w-[2622px] bg-[#020614]">
                <ChartSvg />
                <Legend />
                <TraderPanel />
                <Checklist />
                <div className="absolute left-[2543px] top-[1318px] flex h-[20px] w-[79px] items-center justify-center rounded-l-[2px] bg-[#4caf50] text-[13px] text-white">MNQU2026</div>
              </div>
              <PriceAxis />
            </div>
            <div className="flex h-[33px] items-center bg-black pl-[22.300px] text-[14px] text-[#9a9ea8]">
              {TIME_LABELS.map((t) => (
                <div key={t} className={`w-[65.330px] shrink-0 text-center ${t.endsWith(":00") ? "font-bold text-[#b8bcc6]" : ""}`}>{t}</div>
              ))}
              <svg className="ml-[19px] shrink-0" width="26" height="16" viewBox="0 0 26 16" fill="none" stroke="#b2b5be" strokeWidth="1.100"><path d="M1 8 7 1h12l6 7-6 7H7Z" /><circle cx="13" cy="8" r="3" /></svg>
            </div>
            <BottomBar />
          </div>
        </div>
      </div>
      <FloatingTools />
      <div className="absolute bottom-0 left-0 h-[1.500px] w-[430px] bg-[#dddddd]" />
    </div>
  );
}
